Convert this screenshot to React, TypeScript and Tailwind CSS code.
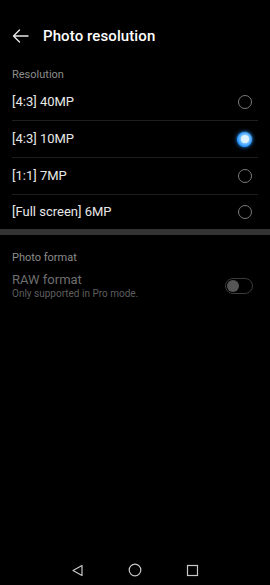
import { useState } from 'react'

const OPTIONS = ['[4:3] 40MP', '[4:3] 10MP', '[1:1] 7MP', '[Full screen] 6MP']

function Radio({ checked }: { checked: boolean }) {
  if (checked) {
    return (
      <div className="w-[15px] h-[15px] rounded-full bg-[#1e8fff] flex items-center justify-center shadow-[0_0_4px_#1e8fff]">
        <div className="w-[8px] h-[8px] rounded-full bg-[#dff2ff] shadow-[0_0_3px_2px_#8fd0ff]" />
      </div>
    )
  }
  return <div className="w-[14px] h-[14px] rounded-full border border-[#7a7a7a]" />
}

export default function App() {
  const [selected, setSelected] = useState(1)

  return (
    <div className="h-[585px] w-[270px] bg-black flex flex-col" style={{ fontFamily: 'Roboto, "Noto Sans", sans-serif' }}>
      {/* Header */}
      <div className="h-16 flex items-center pt-[8px] px-[12px] gap-[14px] shrink-0">
        <svg width="17" height="14" viewBox="0 0 17 14" fill="none" stroke="#e6e6e6" strokeWidth="1.4" strokeLinecap="round" strokeLinejoin="round">
          <path d="M16 7H1.5M7.5 1L1.5 7l6 6" />
        </svg>
        <h1 className="text-[15px] font-medium text-white tracking-[0.1px]">Photo resolution</h1>
      </div>

      {/* Resolution */}
      <div className="h-5 px-[12px] flex items-start pt-[3px]">
        <span className="text-[11px] leading-[16px] text-[#8c8c8c]">Resolution</span>
      </div>
      <div className="px-[12px]">
        {OPTIONS.map((opt, i) => (
          <button
            key={opt}
            onClick={() => setSelected(i)}
            className={
              i < OPTIONS.length - 1
                ? 'w-full h-[37px] flex items-center justify-between border-b border-[#1e1e1e] pr-[6px]'
                : 'w-full h-[34px] flex items-center justify-between pr-[6px]'
            }
          >
            <span className="text-[13px] text-[#e8e8e8]">{opt}</span>
            <Radio checked={selected === i} />
          </button>
        ))}
      </div>

      <div className="h-[6px] bg-[#333333] shrink-0" />

      {/* Photo format */}
      <div className="px-[12px] pt-[15px]">
        <div className="text-[11px] leading-[16px] text-[#8c8c8c]">Photo format</div>
        <div className="mt-[6px] flex items-center justify-between">
          <div>
            <div className="text-[13px] leading-[16px] text-[#6e6e6e]">RAW format</div>
            <div className="text-[10px] leading-[12px] text-[#5e5e5e]">Only supported in Pro mode.</div>
          </div>
          <div className="w-[28px] h-[16px] rounded-full border border-[#3a3a3a] flex items-center px-[1px] mr-[5px]">
            <div className="w-[12px] h-[12px] rounded-full bg-[#555555]" />
          </div>
        </div>
      </div>

      <div className="flex-1" />

      {/* Nav bar */}
      <div className="h-[30px] flex items-center justify-center gap-[44px] shrink-0">
        <svg width="13" height="13" viewBox="0 0 13 13" fill="none" stroke="#c8c8c8" strokeWidth="1.2" strokeLinejoin="round">
          <path d="M11 1.5v10L2 6.5z" />
        </svg>
        <svg width="14" height="14" viewBox="0 0 14 14" fill="none" stroke="#c8c8c8" strokeWidth="1.2">
          <circle cx="7" cy="7" r="5.8" />
        </svg>
        <svg width="13" height="13" viewBox="0 0 13 13" fill="none" stroke="#c8c8c8" strokeWidth="1.2">
          <rect x="1.5" y="1.5" width="10" height="10" />
        </svg>
      </div>
    </div>
  )
}
